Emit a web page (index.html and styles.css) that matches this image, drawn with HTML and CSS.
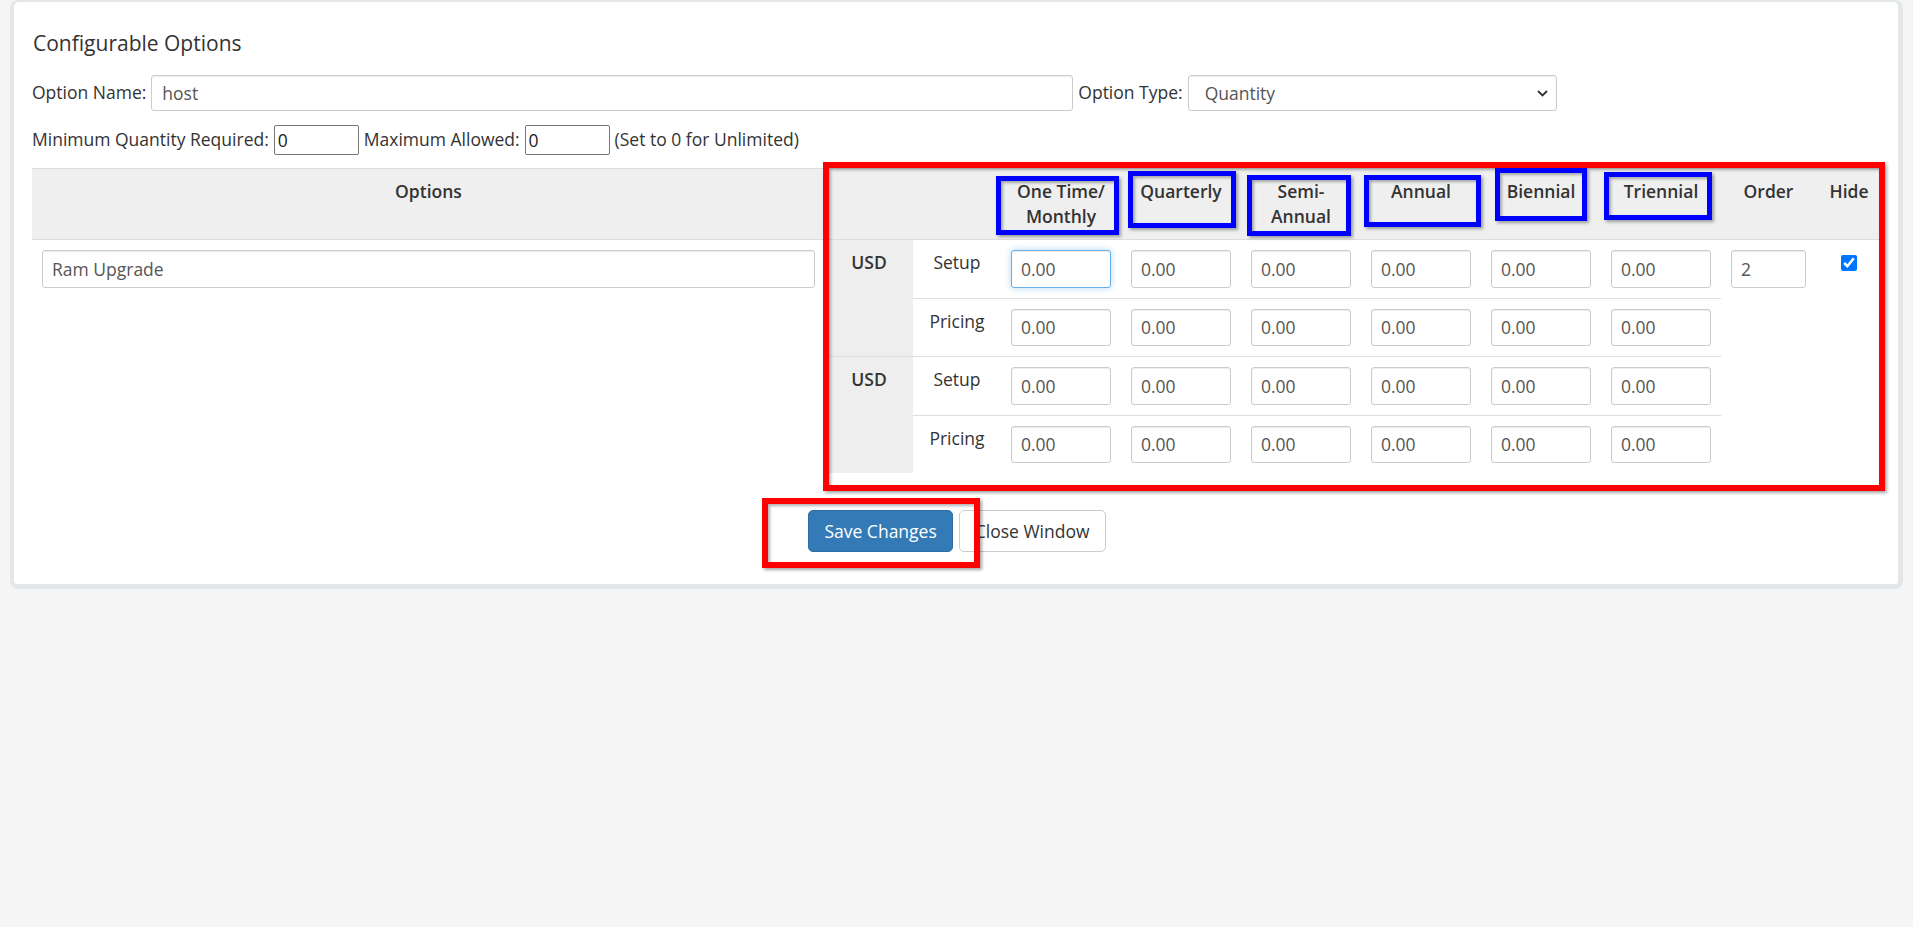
FILE: index.html
```html
<!DOCTYPE html>
<html lang="en">
<head>
    <meta charset="UTF-8">
    <meta name="viewport" content="width=device-width, initial-scale=1.0">
    <title>Configurable Options</title>
    <link rel="stylesheet" href="styles.css">
</head>
<body>
    <div class="card">
        <h2 class="card-title">Configurable Options</h2>

        <div class="form-row">
            <label>Option Name:</label>
            <input type="text" class="form-control name-input" value="host">
            <label>Option Type:</label>
            <div class="select-wrap">
                <select class="form-control type-select">
                    <option>Quantity</option>
                </select>
                <svg class="chevron" width="11" height="7" viewBox="0 0 11 7"><path d="M1 1l4.5 4.5L10 1" fill="none" stroke="#333" stroke-width="1.8"/></svg>
            </div>
        </div>

        <div class="form-row qty-row">
            <label>Minimum Quantity Required:</label>
            <input type="text" class="plain-input" value="0">
            <label>Maximum Allowed:</label>
            <input type="text" class="plain-input" value="0">
            <span>(Set to 0 for Unlimited)</span>
        </div>

        <table class="options-table">
            <colgroup>
                <col style="width: 793px">
                <col style="width: 88px">
                <col style="width: 88px">
                <col style="width: 120px">
                <col style="width: 120px">
                <col style="width: 120px">
                <col style="width: 120px">
                <col style="width: 120px">
                <col style="width: 120px">
                <col style="width: 95px">
                <col style="width: 66px">
            </colgroup>
            <thead>
                <tr>
                    <th>Options</th>
                    <th></th>
                    <th></th>
                    <th>One Time/<br>Monthly</th>
                    <th>Quarterly</th>
                    <th>Semi-<br>Annual</th>
                    <th>Annual</th>
                    <th>Biennial</th>
                    <th>Triennial</th>
                    <th>Order</th>
                    <th>Hide</th>
                </tr>
            </thead>
            <tbody>
                <tr>
                    <td rowspan="4"><input type="text" class="form-control" value="Ram Upgrade"></td>
                    <td rowspan="2" class="currency">USD</td>
                    <td class="row-label">Setup</td>
                    <td><input type="text" class="form-control price-input focused" value="0.00"></td>
                    <td><input type="text" class="form-control price-input" value="0.00"></td>
                    <td><input type="text" class="form-control price-input" value="0.00"></td>
                    <td><input type="text" class="form-control price-input" value="0.00"></td>
                    <td><input type="text" class="form-control price-input" value="0.00"></td>
                    <td><input type="text" class="form-control price-input" value="0.00"></td>
                    <td rowspan="4"><input type="text" class="form-control order-input" value="2"></td>
                    <td rowspan="4"><input type="checkbox" class="hide-check" checked></td>
                </tr>
                <tr>
                    <td class="row-label">Pricing</td>
                    <td><input type="text" class="form-control price-input" value="0.00"></td>
                    <td><input type="text" class="form-control price-input" value="0.00"></td>
                    <td><input type="text" class="form-control price-input" value="0.00"></td>
                    <td><input type="text" class="form-control price-input" value="0.00"></td>
                    <td><input type="text" class="form-control price-input" value="0.00"></td>
                    <td><input type="text" class="form-control price-input" value="0.00"></td>
                </tr>
                <tr>
                    <td rowspan="2" class="currency">USD</td>
                    <td class="row-label">Setup</td>
                    <td><input type="text" class="form-control price-input" value="0.00"></td>
                    <td><input type="text" class="form-control price-input" value="0.00"></td>
                    <td><input type="text" class="form-control price-input" value="0.00"></td>
                    <td><input type="text" class="form-control price-input" value="0.00"></td>
                    <td><input type="text" class="form-control price-input" value="0.00"></td>
                    <td><input type="text" class="form-control price-input" value="0.00"></td>
                </tr>
                <tr>
                    <td class="row-label">Pricing</td>
                    <td><input type="text" class="form-control price-input" value="0.00"></td>
                    <td><input type="text" class="form-control price-input" value="0.00"></td>
                    <td><input type="text" class="form-control price-input" value="0.00"></td>
                    <td><input type="text" class="form-control price-input" value="0.00"></td>
                    <td><input type="text" class="form-control price-input" value="0.00"></td>
                    <td><input type="text" class="form-control price-input" value="0.00"></td>
                </tr>
            </tbody>
        </table>

        <div class="actions">
            <button class="btn btn-primary">Save Changes</button>
            <button class="btn btn-default">Close Window</button>
        </div>
    </div>

    <!-- annotation marks drawn over the screenshot -->
    <div class="mark mark-red mark-pricing"></div>
    <div class="mark mark-red mark-save"></div>
    <div class="mark mark-blue mark-onetime"></div>
    <div class="mark mark-blue mark-quarterly"></div>
    <div class="mark mark-blue mark-semi"></div>
    <div class="mark mark-blue mark-annual"></div>
    <div class="mark mark-blue mark-biennial"></div>
    <div class="mark mark-blue mark-triennial"></div>
</body>
</html>
```

FILE: styles.css
```css
body {
    margin: 0;
    padding: 0 10px;
    background-color: #f5f5f5;
    font-family: 'Open Sans', 'Liberation Sans', sans-serif;
    font-size: 17.5px;
    line-height: 25px;
    color: #333;
}
.card {
    background: white;
    border: 4px solid #e3e7ea;
    border-top-width: 2px;
    border-right-width: 5px;
    border-bottom-width: 5px;
    border-radius: 8px;
    padding: 18px 16px 32px 18px;
}
.card-title {
    margin: 12px 0 19.5px 1px;
    font-size: 21px;
    font-weight: 400;
    line-height: 23px;
    color: #333;
}
.form-row {
    display: flex;
    align-items: center;
    gap: 5px;
    height: 36px;
}
.form-row label {
    white-space: nowrap;
}
.qty-row {
    height: 30px;
    margin-top: 14px;
}
.form-control {
    box-sizing: border-box;
    height: 36px;
    padding: 0 10px;
    border: 1px solid #ccc;
    border-radius: 3px;
    background: white;
    box-shadow: inset 0 1px 1px rgba(0, 0, 0, 0.075);
    font-family: inherit;
    font-size: 17.5px;
    color: #555;
    outline: none;
}
.name-input {
    width: 922px;
}
.select-wrap {
    position: relative;
}
.type-select {
    width: 369px;
    padding-left: 16px;
    appearance: none;
    -webkit-appearance: none;
}
.chevron {
    position: absolute;
    right: 9px;
    top: 15px;
}
.plain-input {
    box-sizing: border-box;
    width: 85px;
    height: 30px;
    padding: 1px 3px;
    border: 1px solid #767676;
    border-radius: 2px;
    font-family: inherit;
    font-size: 17.5px;
    color: #222;
}
.options-table {
    width: 1850px;
    margin-top: 13.5px;
    border-collapse: collapse;
    table-layout: fixed;
}
.options-table th {
    padding: 10px;
    background-color: #efefef;
    border-top: 1px solid #ddd;
    border-bottom: 1px solid #ddd;
    font-weight: 600;
    text-align: center;
    vertical-align: top;
}
.options-table td {
    padding: 10px;
    border-top: 1px solid #ddd;
    vertical-align: top;
}
.options-table td .form-control {
    width: 100%;
    height: 37.5px;
    padding: 0 9px;
}
.options-table .currency {
    background-color: #eee;
    font-weight: 600;
    text-align: center;
}
.options-table .row-label {
    text-align: center;
}
.options-table .focused {
    border-color: #66afe9;
    box-shadow: inset 0 1px 1px rgba(0, 0, 0, 0.075), 0 0 6px rgba(102, 175, 233, 0.5);
}
.hide-check {
    display: block;
    width: 16px;
    height: 16px;
    margin: 5px auto 0;
}
.actions {
    display: flex;
    justify-content: center;
    gap: 6px;
    margin-top: 37px;
}
.btn {
    padding: 7.5px 15px;
    border: 1px solid transparent;
    border-radius: 5px;
    font-family: inherit;
    font-size: 17.5px;
    line-height: 25px;
    cursor: pointer;
}
.btn-primary {
    background-color: #337ab7;
    border-color: #2e6da4;
    color: white;
}
.btn-default {
    background-color: white;
    border-color: #ccc;
    color: #333;
}
.mark {
    position: absolute;
    box-sizing: border-box;
    box-shadow: 2px 2px 3px rgba(0, 0, 0, 0.35), inset 2px 2px 3px rgba(0, 0, 0, 0.3);
    pointer-events: none;
}
.mark-red {
    border: 6px solid #ff0000;
}
.mark-blue {
    border: 5px solid #0000ff;
}
.mark-pricing { left: 823px; top: 162px; width: 1062px; height: 329px; }
.mark-save { left: 762px; top: 498px; width: 218px; height: 70px; }
.mark-onetime { left: 996px; top: 176px; width: 123px; height: 59px; }
.mark-quarterly { left: 1128px; top: 171px; width: 108px; height: 57px; }
.mark-semi { left: 1247px; top: 175px; width: 104px; height: 61px; }
.mark-annual { left: 1364px; top: 175px; width: 117px; height: 52px; }
.mark-biennial { left: 1495px; top: 168px; width: 92px; height: 53px; }
.mark-triennial { left: 1604px; top: 172px; width: 108px; height: 48px; }
```
